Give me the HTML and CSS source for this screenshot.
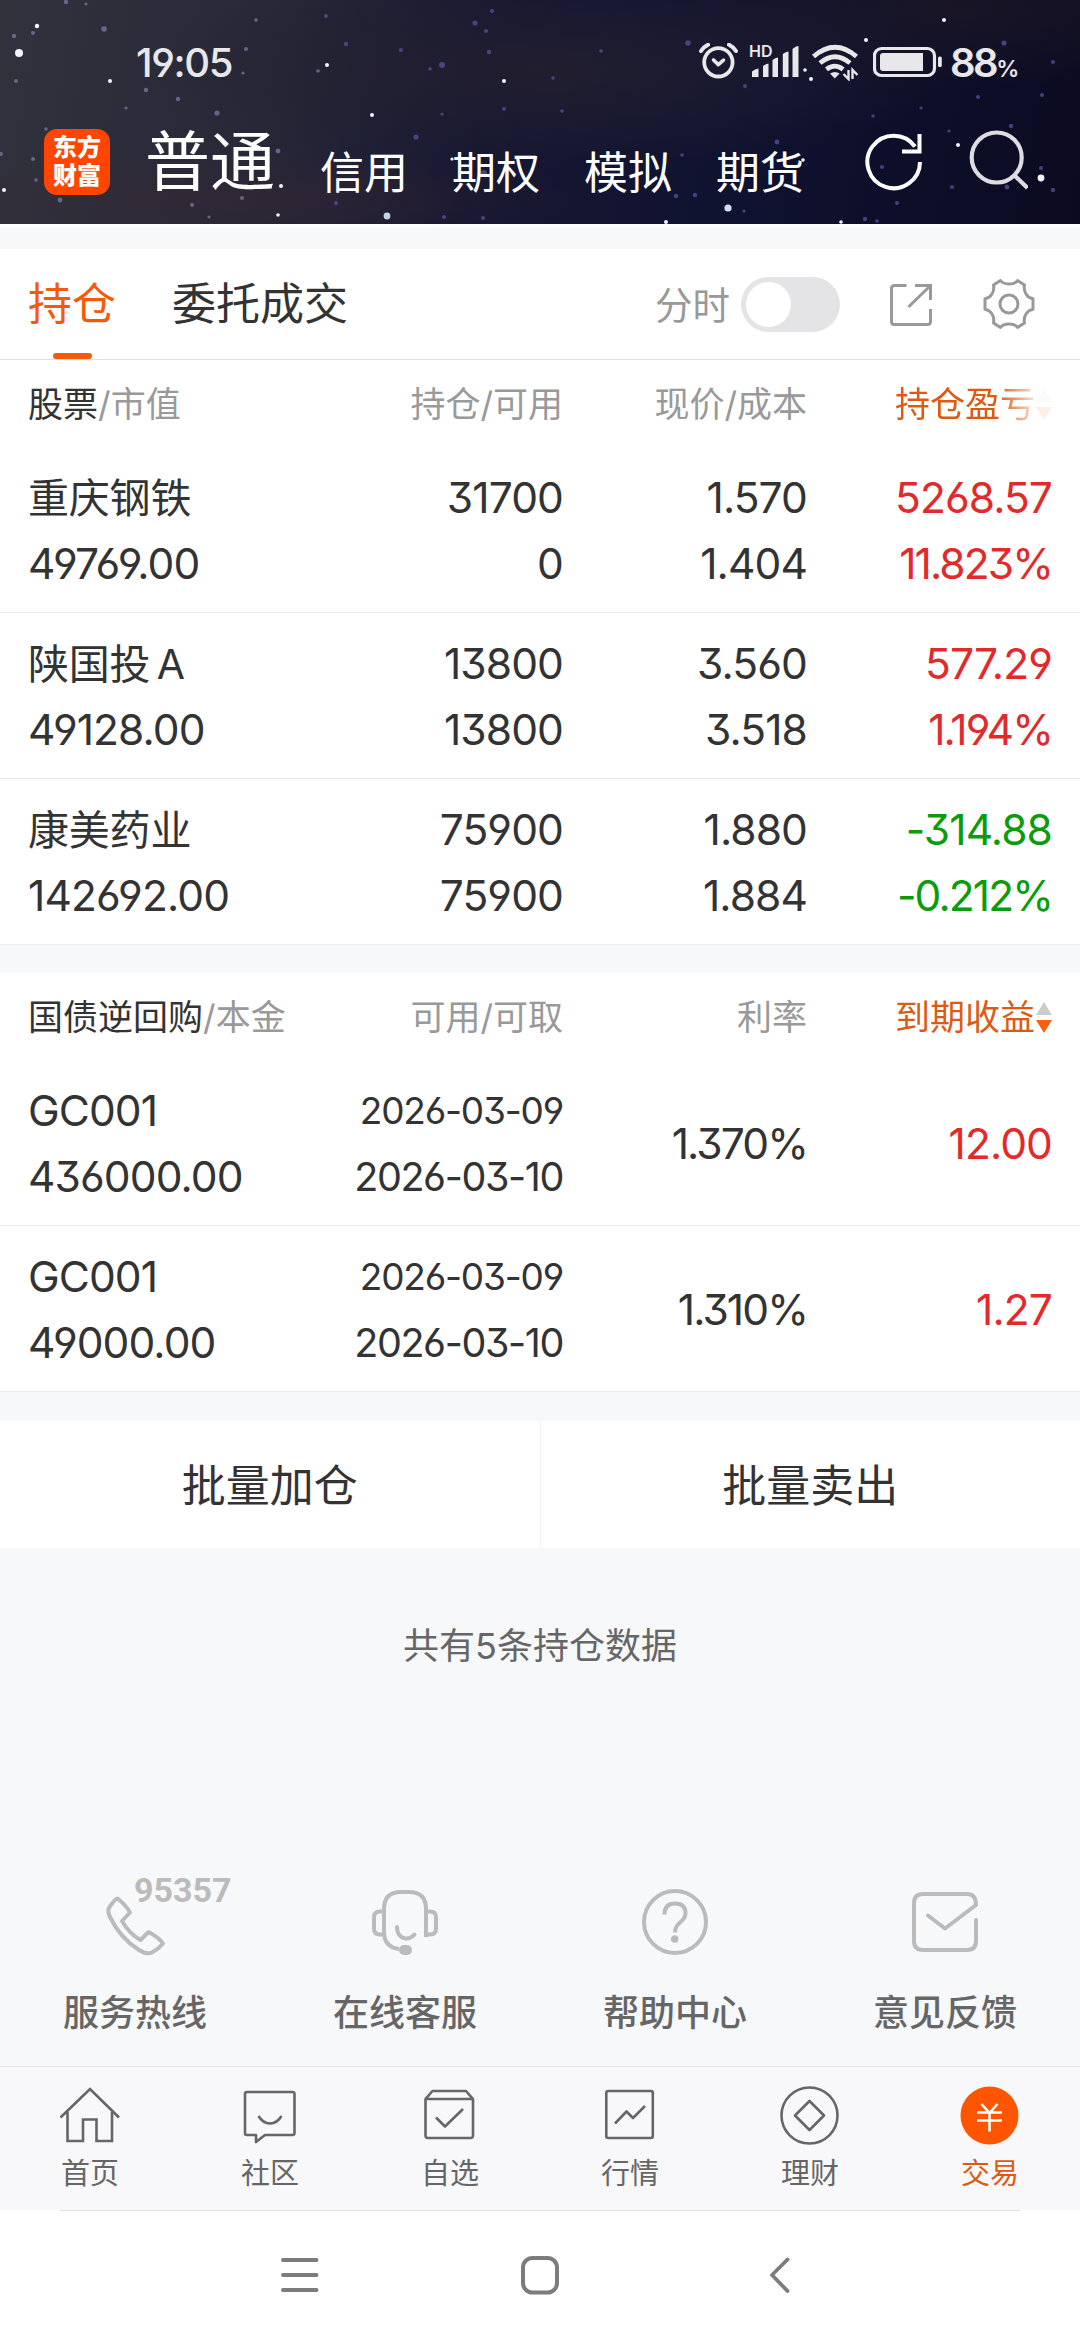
FILE: index.html
```html
<!DOCTYPE html>
<html lang="zh-CN">
<head>
  <meta charset="UTF-8">
  <meta name="viewport" content="width=device-width, initial-scale=1.0">
  <title>持仓</title>
  <link rel="stylesheet" href="styles.css">
</head>
<body>
  <header class="header">
    <!-- Night sky -->
    <svg class="sky" width="1080" height="224" viewBox="0 0 1080 224">
      <g fill="#f2f4ff">
        <circle cx="19" cy="53" r="4"/><circle cx="37" cy="26" r="2.2"/><circle cx="110" cy="81" r="2"/>
        <circle cx="327" cy="65" r="2"/><circle cx="372" cy="115" r="2"/><circle cx="504" cy="81" r="2"/>
        <circle cx="4" cy="190" r="2"/><circle cx="281" cy="186" r="2"/><circle cx="278" cy="215" r="1.8"/>
        <circle cx="387" cy="216" r="3.4" fill="#c4d2ea"/><circle cx="452" cy="159" r="1.6"/>
        <circle cx="728" cy="208" r="3.6" fill="#cfe0f5"/><circle cx="666" cy="222" r="2"/><circle cx="841" cy="222" r="1.8"/>
        <circle cx="944" cy="20" r="2"/><circle cx="866" cy="40" r="2"/><circle cx="805" cy="70" r="1.8"/>
        <circle cx="811" cy="79" r="2"/><circle cx="958" cy="145" r="2"/><circle cx="1041" cy="178" r="3.4"/>
        <circle cx="803" cy="160" r="1.8"/>
      </g>
      <g fill="#77749f" opacity=".8">
        <circle cx="14" cy="36" r="2.2"/><circle cx="33" cy="33" r="2"/><circle cx="66" cy="2" r="2.2"/><circle cx="104" cy="29" r="2.8"/>
        <circle cx="16" cy="81" r="2"/><circle cx="86" cy="4" r="1.6"/><circle cx="146" cy="90" r="2.2"/><circle cx="178" cy="99" r="2.2"/>
        <circle cx="246" cy="49" r="2"/><circle cx="256" cy="20" r="1.8"/><circle cx="217" cy="113" r="2.6"/><circle cx="278" cy="151" r="2.4"/>
        <circle cx="60" cy="200" r="2.4"/><circle cx="192" cy="205" r="2"/><circle cx="33" cy="159" r="2"/><circle cx="36" cy="180" r="1.8"/>
        <circle cx="46" cy="129" r="1.8"/><circle cx="1" cy="154" r="2"/><circle cx="243" cy="73" r="1.6"/><circle cx="242" cy="198" r="2"/>
        <circle cx="126" cy="108" r="1.6"/><circle cx="209" cy="217" r="1.6"/><circle cx="318" cy="71" r="1.8"/>
      </g>
      <g fill="#5752a0" opacity=".75">
        <circle cx="326" cy="16" r="2"/><circle cx="346" cy="44" r="2.2"/><circle cx="401" cy="50" r="2"/><circle cx="442" cy="65" r="3"/>
        <circle cx="475" cy="23" r="2.6"/><circle cx="492" cy="11" r="2"/><circle cx="486" cy="31" r="2"/><circle cx="489" cy="52" r="2.2"/>
        <circle cx="430" cy="69" r="1.8"/><circle cx="504" cy="109" r="2"/><circle cx="416" cy="137" r="2.6"/><circle cx="484" cy="173" r="3"/>
        <circle cx="442" cy="114" r="1.6"/><circle cx="444" cy="217" r="2"/><circle cx="483" cy="218" r="2"/><circle cx="336" cy="203" r="2"/>
        <circle cx="601" cy="51" r="1.8"/><circle cx="553" cy="78" r="1.8"/><circle cx="562" cy="111" r="1.8"/><circle cx="688" cy="43" r="2.8"/>
        <circle cx="745" cy="86" r="2"/><circle cx="777" cy="142" r="2.4"/><circle cx="682" cy="155" r="1.8"/><circle cx="676" cy="196" r="2.2"/>
        <circle cx="695" cy="195" r="2.2"/><circle cx="897" cy="203" r="2"/><circle cx="882" cy="167" r="2"/><circle cx="873" cy="116" r="1.8"/>
        <circle cx="921" cy="108" r="1.6"/><circle cx="978" cy="97" r="2"/><circle cx="1004" cy="43" r="2.6"/><circle cx="1053" cy="62" r="2"/>
        <circle cx="1042" cy="95" r="2"/><circle cx="1011" cy="126" r="2.2"/><circle cx="1007" cy="187" r="2.4"/><circle cx="1041" cy="168" r="2"/>
        <circle cx="1053" cy="190" r="2.2"/><circle cx="952" cy="187" r="2"/><circle cx="865" cy="219" r="2.2"/><circle cx="877" cy="221" r="1.8"/>
        <circle cx="744" cy="211" r="1.6"/><circle cx="949" cy="131" r="1.6"/>
      </g>
    </svg>

    <div class="status-bar">
      <span class="clock">19:05</span>
      <div class="status-icons">
        <svg class="alarm" width="40" height="38" viewBox="698 44 40 38" fill="none" stroke="#e8e8ea" stroke-linecap="round">
          <circle cx="718.4" cy="63.3" r="14.2" stroke-width="3.8"/>
          <path d="M713.5 61l4.8 4.6 5.2-4.4" stroke-width="3.6" stroke-linejoin="round"/>
          <path d="M701 52q2.500-4 7-6.300M736 52q-2.500-4-7-6.300" stroke-width="4"/>
        </svg>
        <div class="signal">
          <span class="hd">HD</span>
          <svg width="50" height="34" viewBox="750 46 50 34" fill="#e8e8ea">
            <path d="M752 72.500q3-2.500 6.500-3V78h-6.500zM763 67q3-2.500 5.500-2.500V78H763zM772.500 61q3-2.500 5.500-2.500V78h-5.500zM782.800 55q3-2.500 5.700-2.500V78h-5.700zM792.500 50q3-3 6-3V78h-6z"/>
          </svg>
        </div>
        <svg class="wifi" width="48" height="38" viewBox="811 44 48 38" fill="none" stroke="#e8e8ea" stroke-width="4.800">
          <path d="M813.500 57.500q21.500-18.500 43 0M820 64q15-12.500 30 0M826.500 70.300q8.300-6.400 16.600 0"/>
          <path d="M830 74.500q4.800-3 9.600 0l-4.800 5z" fill="#e8e8ea" stroke="none"/>
          <path d="M848.500 71v9l-5-5M852.500 80v-9l5 5" stroke-width="2.400"/>
        </svg>
        <svg class="battery" width="70" height="32" viewBox="873 46 70 32">
          <rect x="874.500" y="48.500" width="60" height="27" rx="7" fill="none" stroke="#e8e8ea" stroke-width="3.200"/>
          <path d="M883 53h40v18h-40q-3 0-3-3V56q0-3 3-3z" fill="#e8e8ea"/>
          <rect x="938" y="56.500" width="3.800" height="10.500" rx="1.500" fill="#e8e8ea"/>
        </svg>
        <span class="percent">88<small>%</small></span>
      </div>
    </div>

    <nav class="account-nav">
      <div class="logo"><span>东方</span><span>财富</span></div>
      <a class="account current">普通</a>
      <a class="account">信用</a>
      <a class="account">期权</a>
      <a class="account">模拟</a>
      <a class="account">期货</a>
      <div class="header-tools">
        <svg width="60" height="64" viewBox="862 131 60 64" fill="none" stroke="#fff" stroke-width="4">
          <path d="M918 163a26.300 26.300 0 1 1-5-15.500"/>
          <path d="M917.500 135v17.500H900"/>
        </svg>
        <svg width="60" height="64" viewBox="966 131 60 64" fill="none" stroke="#dcdce2" stroke-width="4.200">
          <circle cx="994.700" cy="158.500" r="25"/>
          <path d="M1012.500 176.500l13 12.500"/>
        </svg>
      </div>
    </nav>
  </header>

  <section class="tabs">
    <a class="tab active">持仓</a>
    <a class="tab">委托成交</a>
    <div class="tab-tools">
      <span class="switch-label">分时</span>
      <span class="switch"></span>
      <svg class="share" width="44" height="44" viewBox="888 281 44 44" fill="none" stroke="#999" stroke-width="3">
        <path d="M905.500 284.500h-12q-3 0-3 3v33q0 3 3 3h33q3 0 3-3V308M914 284.500h15.500V299M929 285l-21.500 21"/>
      </svg>
      <svg class="gear" width="52" height="52" viewBox="982 278 52 52" fill="none" stroke="#999" stroke-width="3" stroke-linejoin="round">
        <path d="M999.500 280.500q2.500 3.500 8.500 3.500t8.500-3.500l7 4.500q-1 5 1.500 9 2.500 4 7 4.800v10.400q-4.500.800-7 4.800-2.500 4-1.500 9l-7 4.500q-2.500-3.500-8.500-3.500t-8.500 3.500l-7-4.500q1-5-1.500-9-2.500-4-7-4.800v-10.400q4.500-.800 7-4.800 2.500-4 1.500-9z"/>
        <circle cx="1008" cy="304" r="9"/>
      </svg>
    </div>
  </section>

  <section class="table">
    <div class="grid head">
      <div><b>股票</b>/市值</div>
      <div>持仓/可用</div>
      <div>现价/成本</div>
      <div class="sorted faded">持仓盈亏<i class="sort"></i></div>
    </div>
    <div class="grid row">
      <div><p class="name">重庆钢铁</p><p>49769.00</p></div>
      <div><p>31700</p><p>0</p></div>
      <div><p>1.570</p><p>1.404</p></div>
      <div class="up"><p>5268.57</p><p class="rate">11.823%</p></div>
    </div>
    <div class="grid row">
      <div><p class="name">陕国投 A</p><p>49128.00</p></div>
      <div><p>13800</p><p>13800</p></div>
      <div><p>3.560</p><p>3.518</p></div>
      <div class="up"><p>577.29</p><p class="rate">1.194%</p></div>
    </div>
    <div class="grid row">
      <div><p class="name">康美药业</p><p>142692.00</p></div>
      <div><p>75900</p><p>75900</p></div>
      <div><p>1.880</p><p>1.884</p></div>
      <div class="down"><p>-314.88</p><p class="rate">-0.212%</p></div>
    </div>
  </section>

  <section class="table">
    <div class="grid head">
      <div><b>国债逆回购</b>/本金</div>
      <div>可用/可取</div>
      <div>利率</div>
      <div class="sorted">到期收益<i class="sort"></i></div>
    </div>
    <div class="grid row">
      <div><p>GC001</p><p>436000.00</p></div>
      <div><p class="date-small">2026-03-09</p><p class="date">2026-03-10</p></div>
      <div><p class="rate">1.370%</p></div>
      <div class="up"><p>12.00</p></div>
    </div>
    <div class="grid row">
      <div><p>GC001</p><p>49000.00</p></div>
      <div><p class="date-small">2026-03-09</p><p class="date">2026-03-10</p></div>
      <div><p class="rate">1.310%</p></div>
      <div class="up"><p>1.27</p></div>
    </div>
  </section>

  <section class="batch">
    <button>批量加仓</button>
    <button>批量卖出</button>
  </section>

  <p class="total">共有5条持仓数据</p>

  <section class="services">
    <a class="service">
      <span class="hotline">95357</span>
      <svg width="72" height="72" viewBox="99 1886 72 72" fill="none" stroke="#bbb" stroke-width="4" stroke-linejoin="round">
        <path d="M117.500 1898.500q-2 0-8 8.500-2.500 4 .5 10 10 21 29 33 8 5 13 2.500 6-3 11-9-4-6-14.500-11.500l-8 8q-11-6-18.500-19l8-8.500q-4.500-8-12.500-14z"/>
      </svg>
      <span>服务热线</span>
    </a>
    <a class="service">
      <svg width="72" height="72" viewBox="369 1886 72 72" fill="none" stroke="#bbb" stroke-width="4">
        <path d="M384 1911.500h-4q-6 0-6 6v11q0 6 6 6h4M426 1911.500h4q6 0 6 6v11q0 6-6 6h-4zM384 1936v-27q0-17 17-17h8q17 0 17 17v28M384 1932q0 15 15 17"/>
        <path d="M397 1927q0 10 8.500 11.500 5 .500 9-4" stroke-linecap="round"/>
        <rect x="399" y="1945" width="13" height="10" rx="5" fill="#bbb" stroke="none"/>
      </svg>
      <span>在线客服</span>
    </a>
    <a class="service">
      <svg width="72" height="72" viewBox="639 1886 72 72" fill="none" stroke="#bbb" stroke-width="4">
        <circle cx="675" cy="1922" r="31"/>
        <path d="M664.500 1914.500q0-11 10.500-11t10.500 9.500q0 5-5 9-5.500 4.500-5.500 10.500"/>
        <circle cx="674.700" cy="1939" r="3.800" fill="#bbb" stroke="none"/>
      </svg>
      <span>帮助中心</span>
    </a>
    <a class="service">
      <svg width="72" height="72" viewBox="909 1886 72 72" fill="none" stroke="#bbb" stroke-width="4" stroke-linecap="round">
        <path d="M976 1920v21q0 9-9 9h-44q-9 0-9-9v-38q0-9 9-9h44q9 0 9 11l-31 23.500-17-13" stroke-linejoin="round"/>
      </svg>
      <span>意见反馈</span>
    </a>
  </section>

  <nav class="tabbar">
    <a class="tabbar-item">
      <svg width="64" height="64" viewBox="58 2083 64 64" fill="none" stroke="#666" stroke-width="2.600">
        <path d="M60.500 2117.500l29.500-28.500 29 28.500M67.500 2112v29H83v-21.500h13.500V2141H112v-29"/>
      </svg>
      <span>首页</span>
    </a>
    <a class="tabbar-item">
      <svg width="64" height="64" viewBox="238 2083 64 64" fill="none" stroke="#666" stroke-width="2.600" stroke-linejoin="round">
        <path d="M247 2092h45.500q2 0 2 2v39q0 2-2 2H265l-9 7v-7h-9q-2 0-2-2v-39q0-2 2-2zM258.500 2116q4.500 7.500 11.500 7.500t11.500-7.500"/>
      </svg>
      <span>社区</span>
    </a>
    <a class="tabbar-item">
      <svg width="64" height="64" viewBox="418 2083 64 64" fill="none" stroke="#666" stroke-width="2.600" stroke-linejoin="round">
        <path d="M425.500 2099l7-8H466l7 8v36.500q0 2.500-2.500 2.500h-42.500q-2.500 0-2.500-2.500zM425.500 2099H473M436 2117.500l9 9 18-17.500"/>
      </svg>
      <span>自选</span>
    </a>
    <a class="tabbar-item">
      <svg width="64" height="64" viewBox="598 2083 64 64" fill="none" stroke="#666" stroke-width="2.600" stroke-linejoin="round">
        <rect x="606.300" y="2091" width="46.500" height="47" rx="2"/>
        <path d="M615 2123.500l11.500-12 6.500 6.500 12-12"/>
      </svg>
      <span>行情</span>
    </a>
    <a class="tabbar-item">
      <svg width="64" height="64" viewBox="778 2083 64 64" fill="none" stroke="#666" stroke-width="2.600" stroke-linejoin="round">
        <circle cx="809.500" cy="2115.500" r="28"/>
        <path d="M809.500 2101l14.500 14.500-14.500 14.500-14.500-14.500z"/>
      </svg>
      <span>理财</span>
    </a>
    <a class="tabbar-item active">
      <svg width="64" height="64" viewBox="958 2083 64 64" fill="none" stroke="#fff" stroke-width="2.600">
        <circle cx="989.500" cy="2115.500" r="29" fill="#ff5500" stroke="none"/>
        <path d="M981.500 2104l8 9 8-9M989.500 2113v18.500M977 2112.500h25M977 2120.500h25"/>
      </svg>
      <span>交易</span>
    </a>
  </nav>

  <footer class="system-nav">
    <svg width="40" height="40" viewBox="0 0 40 40" fill="none" stroke="#7c7c7c" stroke-width="4" stroke-linecap="round">
      <path d="M3 5h33.500M3 20h33.500M3 35h33.500"/>
    </svg>
    <svg width="40" height="40" viewBox="0 0 40 40" fill="none" stroke="#7c7c7c" stroke-width="4">
      <rect x="3" y="3" width="34" height="34.500" rx="9.500"/>
    </svg>
    <svg width="40" height="40" viewBox="0 0 40 40" fill="none" stroke="#7c7c7c" stroke-width="3.800" stroke-linecap="round" stroke-linejoin="round">
      <path d="M27.500 4.500L12 20l15.500 16"/>
    </svg>
  </footer>
</body>
</html>
```
FILE: styles.css
```css
* {
  box-sizing: border-box;
}

body {
  font-family: Inter, "Noto Sans CJK SC", sans-serif;
  font-feature-settings: "cv03", "cv04", "cv09";
  margin: 0;
  width: 1080px;
  height: 2340px;
  background: #f7f8fa;
  color: #333;
  display: flex;
  flex-direction: column;
}

p {
  margin: 0;
}

svg {
  display: block;
  flex: none;
}

/* Header */

.header {
  position: relative;
  height: 227px;
  border-bottom: 3px solid #fff;
  background:
    radial-gradient(ellipse 330px 50px at 260px 200px, rgba(58, 38, 48, 0.45), transparent),
    radial-gradient(ellipse 420px 100px at 540px 70px, rgba(36, 32, 46, 0.8), transparent),
    radial-gradient(ellipse 340px 80px at 950px 10px, rgba(30, 24, 38, 0.7), transparent),
    linear-gradient(100deg, #31323c 0%, #282838 25%, #161732 45%, #0f1230 70%, #0b0a20 100%);
  color: #fff;
}

.sky {
  position: absolute;
  top: 0;
  left: 0;
}

.status-bar {
  position: relative;
  height: 124px;
  padding: 0 62px 0 136px;
  display: flex;
  align-items: center;
  justify-content: space-between;
  color: #e8e8ea;
}

.clock {
  font-size: 40px;
  font-weight: 500;
  letter-spacing: -1.4px;
}

.status-icons {
  display: flex;
  align-items: center;
}

.signal {
  position: relative;
  margin: 0 11px 0 12px;
}

.hd {
  position: absolute;
  top: -1px;
  left: -1px;
  font-size: 16px;
  line-height: 14px;
  font-weight: 600;
}

.battery {
  margin-left: 14px;
}

.percent {
  margin-left: 7px;
  width: 68px;
  font-size: 40px;
  font-weight: 600;
  letter-spacing: -2.5px;
  white-space: nowrap;
}

.percent small {
  font-size: 23px;
}

.account-nav {
  position: relative;
  height: 76px;
  padding: 0 52px 0 44px;
  display: flex;
  align-items: center;
}

.logo {
  width: 66px;
  height: 66px;
  border-radius: 13px;
  background: #ff4600;
  display: flex;
  flex-direction: column;
  align-items: center;
  justify-content: center;
  font-size: 24px;
  line-height: 28px;
  font-weight: 900;
}

.account {
  font-size: 44px;
  line-height: 50px;
  margin: 21px 0 0 44px;
  white-space: nowrap;
}

.account.current {
  font-size: 65px;
  line-height: 70px;
  margin: 0 1px 0 35px;
}

.header-tools {
  display: flex;
  gap: 44px;
  margin-left: auto;
}

/* Tabs */

.tabs {
  height: 111px;
  margin-top: 22px;
  padding: 0 45px 0 28px;
  background: #fff;
  border-bottom: 1px solid #e0e0e0;
  display: flex;
}

.tab {
  position: relative;
  margin-right: 56px;
  font-size: 44px;
  line-height: 110px;
}

.tab.active {
  color: #f55a0a;
}

.tab.active::after {
  content: "";
  position: absolute;
  left: 25px;
  bottom: 0;
  width: 39px;
  height: 6px;
  border-radius: 3px;
  background: #f55a0a;
}

.tab-tools {
  margin-left: auto;
  display: flex;
  align-items: center;
  color: #999;
}

.switch-label {
  font-size: 37.5px;
  padding-bottom: 4px;
}

.switch {
  width: 99px;
  height: 55px;
  margin: 0 49px 0 11px;
  padding: 5px;
  border-radius: 28px;
  background: #e4e4e6;
}

.switch::before {
  content: "";
  display: block;
  width: 45px;
  height: 45px;
  border-radius: 50%;
  background: #fff;
}

.gear {
  margin-left: 50px;
}

/* Holdings */

.table {
  background: #fff;
}

.table + .table {
  margin-top: 28px;
}

.grid {
  display: grid;
  grid-template-columns: 1fr 240px 244px 245px;
  padding: 0 28px;
  text-align: right;
}

.grid > :first-child {
  text-align: left;
}

.head {
  height: 87px;
  font-size: 35px;
  line-height: 88px;
  color: #999;
}

.head b {
  font-weight: 400;
  color: #333;
}

.sorted {
  display: flex;
  justify-content: flex-end;
  align-items: center;
  gap: 1px;
  color: #dc5a12;
}

.sort {
  display: flex;
  flex-direction: column;
  gap: 5px;
}

.sort::before,
.sort::after {
  content: "";
  border: 8px solid transparent;
}

.sort::before {
  border-top: 0;
  border-bottom: 13px solid #ccc;
}

.sort::after {
  border-bottom: 0;
  border-top: 13px solid #f95d10;
}

.faded {
  -webkit-mask-image: linear-gradient(to right, #000 190px, rgba(0, 0, 0, 0.1) 232px);
  mask-image: linear-gradient(to right, #000 190px, rgba(0, 0, 0, 0.1) 232px);
}

.row {
  height: 166px;
  padding-top: 2px;
  border-bottom: 1px solid #ebecee;
  align-items: center;
  font-size: 42.5px;
  line-height: 66px;
  letter-spacing: -0.9px;
}

.name {
  font-size: 41px;
  letter-spacing: -0.2px;
  word-spacing: -5px;
}

.rate {
  letter-spacing: -1.9px;
}

.date-small {
  font-size: 37px;
  letter-spacing: -1.2px;
}

.date {
  font-size: 39.5px;
  letter-spacing: -1.4px;
}

.up {
  color: #e22a2a;
}

.down {
  color: #0a9c0a;
}

/* Batch actions */

.batch {
  height: 127px;
  margin-top: 29px;
  background: #fff;
  display: flex;
}

.batch button {
  flex: 1;
  padding: 0 0 4px;
  border: none;
  background: none;
  font: inherit;
  font-size: 44px;
  color: #333;
}

.batch button + button {
  border-left: 1px solid #f4f4f6;
}

.total {
  margin-top: 73px;
  font-size: 36px;
  line-height: 50px;
  text-align: center;
  color: #666;
}

/* Services */

.services {
  margin-top: auto;
  height: 180px;
  display: flex;
}

.service {
  position: relative;
  flex: 1;
  display: flex;
  flex-direction: column;
  align-items: center;
  gap: 30px;
  font-size: 36px;
  line-height: 50px;
  font-weight: 500;
  color: #666;
}

.hotline {
  position: absolute;
  left: 134px;
  top: -11px;
  font-family: Roboto, sans-serif;
  font-size: 34px;
  line-height: 30px;
  font-weight: 700;
  color: #bbb;
}

/* Bottom tabs */

.tabbar {
  height: 144px;
  border-top: 1px solid #e2e2e4;
  background: #f8f8fa;
  display: flex;
}

.tabbar-item {
  flex: 1;
  padding-top: 16px;
  display: flex;
  flex-direction: column;
  align-items: center;
  font-size: 29px;
  line-height: 53px;
  color: #666;
}

.tabbar-item.active {
  color: #dc5a12;
}

.system-nav {
  height: 130px;
  padding: 0 180px;
  background: linear-gradient(#e2e2e4, #e2e2e4) center top / 960px 1px no-repeat #fff;
  display: flex;
  align-items: center;
  justify-content: space-around;
}
```
